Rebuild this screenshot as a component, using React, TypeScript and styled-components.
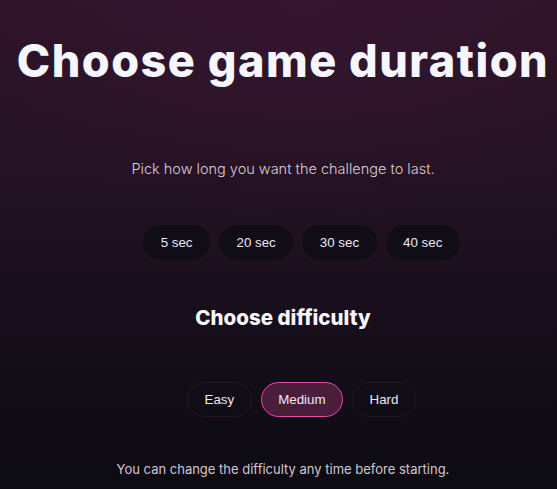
import React, { useState } from "react";
import styled, { createGlobalStyle } from "styled-components";

const Global = createGlobalStyle`
  html, body {
    margin: 0;
    padding: 0;
    width: 557px;
    height: 489px;
    overflow: hidden;
    background: #0d0b12;
  }
  #root { width: 557px; height: 489px; }
  * { box-sizing: border-box; }
`;

const Page = styled.main`
  width: 557px;
  height: 489px;
  overflow: hidden;
  padding-left: 9px;
  display: flex;
  flex-direction: column;
  align-items: center;
  background:
    radial-gradient(ellipse 70% 45% at 55% 0%, rgba(60, 22, 52, 0.55), rgba(60, 22, 52, 0) 100%),
    linear-gradient(180deg, #2c1428 0%, #251324 30%, #1a0f1d 60%, #110d17 80%, #0d0b12 100%);
  color: #f5f3ff;
`;

const Title = styled.h1`
  margin: 34px 0 0;
  font-family: Inter, "Noto Sans", sans-serif;
  font-weight: 800;
  font-size: 45px;
  line-height: 54px;
  white-space: nowrap;
  color: #f6f6ff;
  letter-spacing: 1.5px;
`;

const Lead = styled.p`
  margin: 71px 0 0;
  font-family: Inter, "Noto Sans", sans-serif;
  font-weight: 300;
  font-size: 14.5px;
  line-height: 20px;
  color: #dccdd9;
`;

const Row = styled.div<{ $top: number }>`
  align-self: stretch;
  padding-left: 37px;
  display: flex;
  justify-content: center;
  gap: 9px;
  margin-top: ${(p) => p.$top}px;
`;

const Pill = styled.button<{ $active?: boolean; $outlined?: boolean }>`
  height: 35px;
  padding: 0 16.5px;
  border-radius: 999px;
  font-family: "Liberation Sans", Arial, sans-serif;
  font-size: 13.33px;
  cursor: pointer;
  color: ${(p) => (p.$active ? "#f3e6f4" : "#ece8f4")};
  background: ${(p) => (p.$active ? "#4a1d3b" : p.$outlined ? "transparent" : "#100d17")};
  border: 1px solid
    ${(p) => (p.$active ? "#e54bab" : p.$outlined ? "#2b1527" : "#100d17")};
`;

const SubTitle = styled.h2`
  margin: 45px 0 0;
  font-family: Inter, "Noto Sans", sans-serif;
  font-weight: 800;
  font-size: 20.5px;
  line-height: 26px;
  color: #f8f6ff;
`;

const Note = styled.p`
  margin: 43px 0 0;
  font-family: Inter, "Noto Sans", sans-serif;
  font-weight: 400;
  font-size: 13px;
  line-height: 18px;
  color: #d3c6d0;
`;

const durations = [5, 20, 30, 40];
const levels = ["Easy", "Medium", "Hard"];

export default function App() {
  const [duration, setDuration] = useState<number | null>(null);
  const [level, setLevel] = useState("Medium");
  return (
    <>
      <Global />
      <Page>
        <Title>Choose game duration</Title>
        <Lead>Pick how long you want the challenge to last.</Lead>
        <Row $top={46}>
          {durations.map((d) => (
            <Pill key={d} $active={duration === d} onClick={() => setDuration(d)}>
              {d} sec
            </Pill>
          ))}
        </Row>
        <SubTitle>Choose difficulty</SubTitle>
        <Row $top={51}>
          {levels.map((l) => (
            <Pill key={l} $outlined $active={level === l} onClick={() => setLevel(l)}>
              {l}
            </Pill>
          ))}
        </Row>
        <Note>You can change the difficulty any time before starting.</Note>
      </Page>
    </>
  );
}
